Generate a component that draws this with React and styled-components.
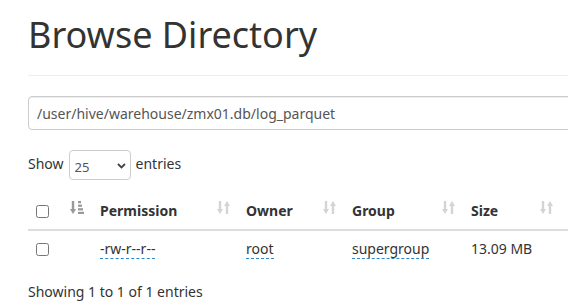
import React from 'react'
import styled, { createGlobalStyle } from 'styled-components'

const GlobalStyle = createGlobalStyle`
  html, body {
    margin: 0;
    padding: 0;
    overflow: hidden;
    background: #fff;
  }
  body {
    font-family: "Noto Sans", "Segoe UI", sans-serif;
    font-size: 14px;
    line-height: 20px;
    color: #333;
  }
`

const Page = styled.div`
  width: 1200px;
  padding-left: 28px;
`

const PageHeader = styled.header`
  padding: 15px 0 20px;
  border-bottom: 1px solid #eee;
  h1 {
    margin: 0;
    font-size: 36px;
    line-height: 40px;
    font-weight: 400;
    color: #333;
  }
`

const PathInput = styled.input`
  display: block;
  box-sizing: border-box;
  width: 100%;
  height: 34px;
  margin-top: 20px;
  padding: 0 8px;
  border: 1px solid #ccc;
  border-radius: 4px;
  font-family: inherit;
  font-size: 14px;
  color: #555;
  box-shadow: inset 0 1px 1px rgba(0, 0, 0, 0.075);
`

const LengthRow = styled.div`
  display: flex;
  align-items: center;
  gap: 5px;
  margin-top: 20px;
  height: 30px;
  span {
    margin-top: -3px;
  }
`

const SelectWrap = styled.div`
  position: relative;
  width: 62px;
  height: 30px;
`

const Select = styled.select`
  appearance: none;
  box-sizing: border-box;
  width: 100%;
  height: 30px;
  padding: 4px 0 0 5px;
  border: 1px solid #ccc;
  border-radius: 4px;
  background: #fff;
  font-family: inherit;
  font-size: 13px;
  color: #555;
`

const Chevron = styled.svg`
  position: absolute;
  right: 5px;
  top: 13px;
  pointer-events: none;
`

const Table = styled.table`
  width: 813px;
  margin-top: 13px;
  border-collapse: collapse;
  table-layout: fixed;
`

const Col = styled.col`
  width: ${(p) => p.$w}px;
`

const Th = styled.th`
  position: relative;
  padding: 8px ${(p) => (p.$sort ? 30 : 8)}px 8px ${(p) => (p.$tight ? 0 : 8)}px;
  border-bottom: 2px solid #ddd;
  text-align: left;
  vertical-align: bottom;
  font-weight: 700;
  line-height: 20px;
  white-space: nowrap;
`

const Td = styled.td`
  padding: 8px;
  border-top: 1px solid #ddd;
  line-height: 20px;
  vertical-align: top;
  white-space: nowrap;
`

const Check = styled.input`
  margin: 0;
  width: 13px;
  height: 13px;
  vertical-align: middle;
  position: relative;
  top: -1px;
`

const SortIcon = styled.svg`
  position: absolute;
  right: 8px;
  top: 7px;
  color: ${(p) => (p.$active ? '#999' : '#d4d4d4')};
`

const Tip = styled.span`
  border-bottom: 1px dashed #2f86c9;
`

const Info = styled.div`
  margin-top: 15px;
  line-height: 20px;
`

function SortBoth() {
  return (
    <SortIcon width="13" height="15" viewBox="0 0 13 15" fill="currentColor">
      <rect x="1.8" y="1" width="2.4" height="9.5" />
      <polygon points="0,9 6,9 3,14" />
      <rect x="8.8" y="4.5" width="2.4" height="9.5" />
      <polygon points="7,6 13,6 10,1" />
    </SortIcon>
  )
}

function SortDesc() {
  return (
    <SortIcon $active width="14" height="15" viewBox="0 0 14 15" fill="currentColor">
      <rect x="1.8" y="1" width="2.4" height="9.5" />
      <polygon points="0,9 6,9 3,14" />
      <rect x="8" y="1" width="3" height="2.2" />
      <rect x="8" y="4.6" width="4" height="2.2" />
      <rect x="8" y="8.2" width="5" height="2.2" />
      <rect x="8" y="11.8" width="6" height="2.2" />
    </SortIcon>
  )
}

const columns = [
  { title: 'Permission', w: 146 },
  { title: 'Owner', w: 106 },
  { title: 'Group', w: 119 },
  { title: 'Size', w: 98 },
]

export default function App() {
  return (
    <>
      <GlobalStyle />
      <Page>
        <PageHeader>
          <h1>Browse Directory</h1>
        </PageHeader>
        <PathInput defaultValue="/user/hive/warehouse/zmx01.db/log_parquet" />
        <LengthRow>
          <span>Show</span>
          <SelectWrap>
            <Select defaultValue="25">
              <option>10</option>
              <option>25</option>
              <option>50</option>
              <option>100</option>
            </Select>
            <Chevron width="9" height="6" viewBox="0 0 9 6">
              <polyline points="1,1 4.5,4.5 8,1" fill="none" stroke="#444" strokeWidth="1.8" />
            </Chevron>
          </SelectWrap>
          <span>entries</span>
        </LengthRow>
        <Table>
          <colgroup>
            <Col $w={34} />
            <Col $w={30} />
            {columns.map((c) => (
              <Col key={c.title} $w={c.w} />
            ))}
            <Col $w={280} />
          </colgroup>
          <thead>
            <tr>
              <Th>
                <Check type="checkbox" />
              </Th>
              <Th $sort $tight>
                <SortDesc />
              </Th>
              {columns.map((c) => (
                <Th key={c.title} $sort>
                  {c.title}
                  <SortBoth />
                </Th>
              ))}
              <Th />
            </tr>
          </thead>
          <tbody>
            <tr>
              <Td>
                <Check type="checkbox" />
              </Td>
              <Td />
              <Td>
                <Tip>-rw-r--r--</Tip>
              </Td>
              <Td>
                <Tip>root</Tip>
              </Td>
              <Td>
                <Tip>supergroup</Tip>
              </Td>
              <Td>13.09 MB</Td>
              <Td />
            </tr>
          </tbody>
        </Table>
        <Info>Showing 1 to 1 of 1 entries</Info>
      </Page>
    </>
  )
}
